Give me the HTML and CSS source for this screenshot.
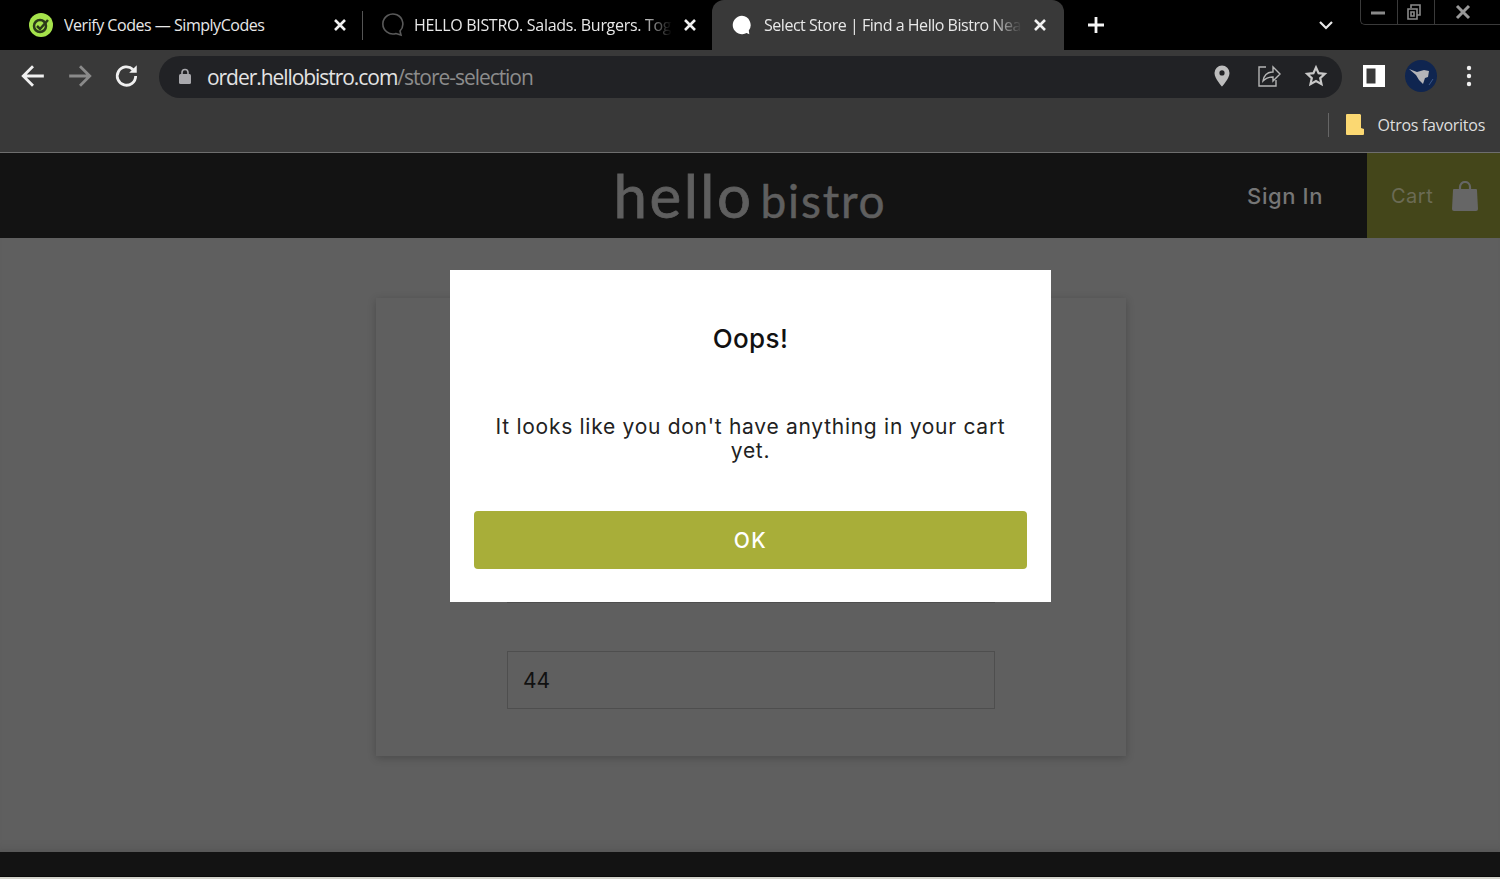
FILE: index.html
```html
<!DOCTYPE html>
<html lang="en">
<head>
<meta charset="utf-8">
<title>Select Store</title>
<link rel="stylesheet" href="styles.css">
</head>
<body>
<div class="chrome">
  <div class="tabstrip">
    <div class="tab tab-first">
      <svg class="favicon" viewBox="0 0 24 24"><circle cx="12" cy="12" r="12" fill="#a5e34b"/><circle cx="11" cy="13" r="6" fill="none" stroke="#2b3a1a" stroke-width="2.5"/><path d="M8 13l3 3 8-9" fill="none" stroke="#2b3a1a" stroke-width="2.5"/></svg>
      <span class="tab-title">Verify Codes — SimplyCodes</span>
      <svg class="close" viewBox="0 0 12 12"><path d="M1 1l10 10M11 1L1 11"/></svg>
    </div>
    <div class="tab tab-second">
      <svg class="favicon" viewBox="0 0 24 24"><path d="M16 20.5A10 10 0 1 1 20 18l1 4z" fill="none" stroke="#5a5a5a" stroke-width="1.6"/></svg>
      <span class="tab-title fade">HELLO BISTRO. Salads. Burgers. Tog</span>
      <svg class="close" viewBox="0 0 12 12"><path d="M1 1l10 10M11 1L1 11"/></svg>
    </div>
    <div class="tab tab-active">
      <svg class="favicon" viewBox="0 0 24 24"><path d="M12 2a10 10 0 1 0 5 18.6l3 1.4-.6-4A10 10 0 0 0 12 2z" fill="#fff"/></svg>
      <span class="tab-title fade-active">Select Store | Find a Hello Bistro Nea</span>
      <svg class="close" viewBox="0 0 12 12"><path d="M1 1l10 10M11 1L1 11"/></svg>
    </div>
    <svg class="newtab" viewBox="0 0 18 18"><path d="M9 1v16M1 9h16"/></svg>
    <svg class="chevron" viewBox="0 0 16 10"><path d="M2 2l6 6 6-6"/></svg>
    <div class="winctl">
      <span class="win-btn win-min"><svg viewBox="0 0 16 16"><path d="M1 9h14" stroke="#8a8a8a" stroke-width="3"/></svg></span>
      <span class="win-btn win-max"><svg viewBox="0 0 16 16"><path d="M5 4V1h9v10h-3M2 5h9v10H2z M5 8h3v4H5z" fill="none" stroke="#8a8a8a" stroke-width="1.6"/></svg></span>
      <span class="win-btn win-close"><svg viewBox="0 0 16 16"><path d="M2 2l12 12M14 2L2 14" stroke="#999" stroke-width="3"/></svg></span>
    </div>
  </div>
  <div class="toolbar">
    <svg class="nav" viewBox="0 0 24 24"><path d="M22 12H3M12 3l-9 9 9 9" stroke="#f0f0f0"/></svg>
    <svg class="nav" viewBox="0 0 24 24"><path d="M2 12h19M12 3l9 9-9 9" stroke="#8a8a8a"/></svg>
    <svg class="nav" viewBox="0 0 24 24"><path d="M20 12a8.500 8.500 0 1 1-2.500-6" stroke="#f0f0f0"/><path d="M21 2v7h-7z" fill="#f0f0f0"/></svg>
    <div class="omnibox">
      <svg class="lock" viewBox="0 0 12 16"><path d="M3 7V4.500a3 3 0 0 1 6 0V7" fill="none" stroke="#a8a8ac" stroke-width="1.600"/><rect y="6" width="12" height="10" rx="1.500" fill="#a8a8ac"/></svg>
      <span class="url">order.hellobistro.com<span class="url-path">/store-selection</span></span>
      <div class="omni-actions">
        <svg viewBox="0 0 24 24"><path d="M12 1.500a7.500 7.500 0 0 0-7.500 7.500c0 5.500 7.500 13.500 7.500 13.500s7.500-8 7.500-13.500A7.500 7.500 0 0 0 12 1.500zm0 10a2.600 2.600 0 1 1 0-5.200 2.600 2.600 0 0 1 0 5.200z" fill="#bdbdbd" fill-rule="evenodd"/></svg>
        <svg viewBox="0 0 24 24"><path d="M9 3H2v19h17v-6M6 17c1-6 5-9 10-9V3l7 7-7 7v-4c-4 0-7 1-10 4z" fill="none" stroke="#b5b5b5" stroke-width="1.400"/></svg>
        <svg viewBox="0 0 24 24"><path d="M12 3.500l2.600 5.700 6.200.7-4.600 4.200 1.300 6.100-5.500-3.100-5.500 3.100 1.300-6.100-4.600-4.200 6.200-.7z" fill="none" stroke="#c8c8c8" stroke-width="2.200"/></svg>
      </div>
    </div>
    <div class="tool-actions">
      <svg class="panel" viewBox="0 0 22 22"><path d="M0 0h22v22H0z" fill="#fff"/><path d="M3.500 3.500h9v15h-9z" fill="#393939"/></svg>
      <svg class="avatar" viewBox="0 0 32 32"><ellipse cx="16" cy="16" rx="16" ry="16" fill="#0f2550"/><path d="M4 9l8 3 7-2 5 1-1 6-3 1-2 6-4-4-3-5z" fill="#b4b4b8"/><path d="M24 25l4-6" stroke="#3d5a8c"/></svg>
      <svg class="menu" viewBox="0 0 6 22"><circle cx="3" cy="3" r="2.200"/><circle cx="3" cy="11" r="2.200"/><circle cx="3" cy="19" r="2.200"/></svg>
    </div>
  </div>
  <div class="bookmarks">
    <span class="bm-sep"></span>
    <svg class="folder" viewBox="0 0 18 21"><path d="M0 1a1 1 0 0 1 1-1h13l1 1v13l3 1v5a1 1 0 0 1-1 1H1a1 1 0 0 1-1-1z" fill="#fbd872"/></svg>
    <span class="bm-label">Otros favoritos</span>
  </div>
</div>
<header class="site-header">
  <div class="logo"><span class="logo-script">hello</span><span class="logo-word">bistro</span></div>
  <div class="header-actions">
    <span class="signin">Sign In</span>
    <div class="cart">
      <span class="cart-label">Cart</span>
      <svg class="bag" viewBox="0 0 26 30"><path d="M8 8V6a5 5 0 0 1 10 0v2" fill="none" stroke="#666" stroke-width="2.200"/><path d="M2 8h22a1 1 0 0 1 1 1l1 19a2 2 0 0 1-2 2H2a2 2 0 0 1-2-2L1 9a1 1 0 0 1 1-1z" fill="#666"/></svg>
    </div>
  </div>
</header>
<main class="page">
  <section class="card">
    <div class="field"></div>
    <div class="field">44</div>
  </section>
</main>
<footer class="site-footer"></footer>
<div class="modal">
  <h2 class="modal-title">Oops!</h2>
  <p class="modal-text">It looks like you don't have anything in your cart yet.</p>
  <button class="modal-btn">OK</button>
</div>
</body>
</html>
```
FILE: styles.css
```css
* { box-sizing: border-box; }
html, body { margin: 0; height: 879px; overflow: hidden; }
body { background: #d4d4cc; font-family: "Open Sans", "Noto Sans", sans-serif; position: relative; }

.chrome { background: #393939; height: 153px; border-bottom: 1px solid #6e6e6e; }
.tabstrip { height: 50px; background: #000; display: flex; align-items: center; color: #e8e8e8; }
.tab { height: 50px; display: flex; align-items: center; font-size: 16px; flex: none; letter-spacing: -0.47px; }
.tab-first { width: 363px; padding-left: 29px; padding-right: 17px; position: relative; }
.tab-first::after { content: ""; position: absolute; right: 0; top: 11px; height: 29px; width: 1px; background: #555; }
.tab-second { width: 349px; padding-left: 17px; padding-right: 16px; letter-spacing: -0.3px; }
.tab-active { width: 352px; padding-left: 19px; padding-right: 18px; background: #393939; border-radius: 12px 12px 0 0; }
.favicon { width: 24px; height: 24px; flex: none; margin-right: 11px; }
.tab-second .favicon { margin-right: 10px; }
.tab-active .favicon { width: 22px; height: 22px; margin-right: 11px; }
.tab-title { flex: 1; white-space: nowrap; overflow: hidden; }
.fade { -webkit-mask-image: linear-gradient(90deg, #000 88%, transparent 100%); mask-image: linear-gradient(90deg, #000 88%, transparent 100%); }
.fade-active { -webkit-mask-image: linear-gradient(90deg, #000 88%, transparent 100%); mask-image: linear-gradient(90deg, #000 88%, transparent 100%); }
.close { width: 12px; height: 12px; flex: none; margin-left: 12px; fill: none; stroke: #f0f0f0; stroke-width: 2.600; }
.newtab { width: 18px; height: 18px; flex: none; margin-left: 23px; fill: none; stroke: #f5f5f5; stroke-width: 2.800; }
.chevron { width: 16px; height: 10px; flex: none; margin-left: 213px; fill: none; stroke: #e8e8e8; stroke-width: 2.200; }
.winctl { margin-left: 26px; align-self: flex-start; width: 140px; height: 25px; display: flex; border: 1px solid #3a3a3a; border-top: 0; border-right: 0; border-radius: 0 0 0 5px; }
.win-btn { display: flex; align-items: center; justify-content: center; height: 100%; border-right: 1px solid #3a3a3a; }
.win-btn svg { width: 16px; height: 16px; }
.win-min { width: 37px; padding-right: 3px; }
.win-max { width: 37px; padding-right: 5px; }
.win-close { flex: 1; border-right: 0; padding-right: 10px; }

.toolbar { height: 55px; display: flex; align-items: center; padding: 0 20px 3px 20px; }
.nav { width: 26px; height: 26px; flex: none; margin-right: 21px; fill: none; stroke-width: 2.600; }
.nav:nth-of-type(3) { margin-right: 19px; }
.omnibox { flex: none; width: 1183px; height: 42px; margin-top: 2px; background: #212225; border-radius: 21px; display: flex; align-items: center; padding-left: 20px; padding-right: 14px; }
.lock { width: 12px; height: 16px; flex: none; margin-right: 16px; margin-top: -3px; }
.url { font-size: 21px; letter-spacing: -1.05px; color: #e3e3e3; white-space: nowrap; }
.url-path { color: #8c8c8c; }
.omni-actions { margin-left: auto; display: flex; gap: 23px; margin-top: -2px; }
.omni-actions svg { width: 24px; height: 24px; flex: none; }
.tool-actions { display: flex; align-items: center; margin-left: 21px; }
.panel { width: 22px; height: 22px; flex: none; }
.avatar { width: 32px; height: 32px; flex: none; margin-left: 20px; fill: none; }
.menu { width: 6px; height: 22px; flex: none; margin-left: 29px; fill: #f0f0f0; }

.bookmarks { height: 47px; display: flex; align-items: center; justify-content: flex-end; padding-right: 15px; padding-bottom: 8px; color: #dedede; font-size: 16px; letter-spacing: -0.27px; }
.bm-sep { width: 1px; height: 24px; background: #666; margin-right: 17px; }
.folder { width: 18px; height: 21px; flex: none; margin-right: 14px; }

.site-header { height: 85px; background: #131313; display: flex; align-items: center; justify-content: center; position: relative; }
.logo { display: flex; align-items: baseline; color: #5f5f5f; transform: translateY(-1px); }
.logo-script { font-family: "Lato", sans-serif; font-size: 60px; font-weight: 400; letter-spacing: 2.500px; line-height: 1; -webkit-text-stroke: 0.8px #5f5f5f; }
.logo-word { font-family: "Lato", sans-serif; font-size: 46px; font-weight: 400; letter-spacing: 1.800px; margin-left: 7px; line-height: 1; -webkit-text-stroke: 0.5px #5f5f5f; }
.header-actions { position: absolute; right: 0; top: 0; bottom: 0; display: flex; align-items: center; }
.signin { font-family: "Inter", sans-serif; font-weight: 500; font-size: 22px; letter-spacing: 0.6px; color: #767676; margin-right: 44px; }
.cart { width: 133px; height: 100%; background: #44461a; display: flex; align-items: center; padding-left: 24px; }
.cart-label { font-family: "Inter", sans-serif; font-size: 20px; letter-spacing: 0.5px; color: #6b6b55; }
.bag { width: 26px; height: 30px; margin-left: 19px; flex: none; }

.page { height: 614px; background: #5f5f5f; padding: 60px 0 0 2px; box-shadow: inset 0 -10px 8px -8px #555; }
.card { width: 750px; height: 458px; margin: 0 auto; background: #5f5f5f; box-shadow: 0 2px 8px rgba(0, 0, 0, .22); padding: 247px 131px 0; display: flex; flex-direction: column; gap: 48px; }
.field { height: 58px; width: 488px; flex: none; border: 1px solid #4e4e4e; display: flex; align-items: center; padding-left: 15px; font-family: "Inter", sans-serif; font-size: 21px; color: #111; }

.site-footer { height: 25px; background: #131313; border-bottom: 1px solid #0a0a0a; }

.modal { position: absolute; left: 450px; top: 270px; width: 601px; height: 332px; background: #fff; padding: 0 24px; display: flex; flex-direction: column; align-items: stretch; text-align: center; }
.modal-title { font-family: "Inter", sans-serif; font-size: 26px; font-weight: 500; letter-spacing: 0.4px; color: #111; margin: 54px 0 0; line-height: 30px; }
.modal-text { font-family: "Inter", sans-serif; font-size: 21px; letter-spacing: 0.72px; line-height: 24px; color: #222; margin: 61px 0 0; }
.modal-btn { margin-top: 48px; height: 58px; background: #a8ae39; color: #fff; border: 0; border-radius: 4px; font-family: "Inter", sans-serif; font-size: 21px; letter-spacing: 1.500px; font-weight: 500; }
```
